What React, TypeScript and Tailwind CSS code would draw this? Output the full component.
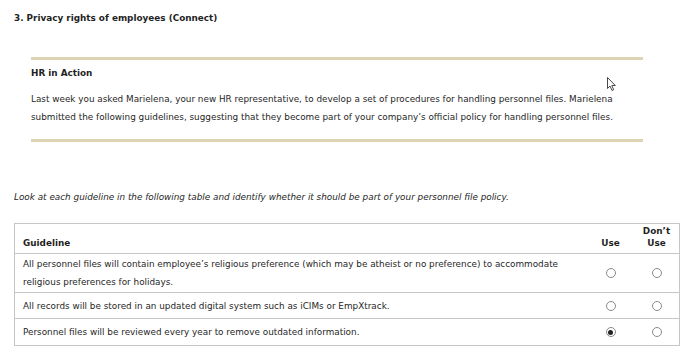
import React from "react";

type Row = { text: React.ReactNode; h: string; choice: "use" | "dont" | null };

const rows: Row[] = [
  {
    text: (
      <>
        All personnel files will contain employee’s religious preference (which may be atheist or no preference) to accommodate
        <br />
        religious preferences for holidays.
      </>
    ),
    h: "h-[39px]",
    choice: null,
  },
  {
    text: "All records will be stored in an updated digital system such as iCIMs or EmpXtrack.",
    h: "h-[26px]",
    choice: null,
  },
  {
    text: "Personnel files will be reviewed every year to remove outdated information.",
    h: "h-[26px]",
    choice: "use",
  },
];

function Radio({ checked }: { checked: boolean }) {
  return (
    <span className="flex h-[10px] w-[10px] items-center justify-center rounded-full border border-[#8a8a8a] bg-white">
      {checked && <span className="h-[5px] w-[5px] rounded-full bg-[#222]" />}
    </span>
  );
}

function Pointer() {
  return (
    <svg className="absolute left-[607px] top-[77px]" width="10" height="15" viewBox="0 0 10 15">
      <path
        d="M0.5 0.5 L0.5 11.5 L3 9 L5 13.5 L6.7 12.7 L4.8 8.5 L8.3 8.5 Z"
        fill="#fff"
        stroke="#333"
        strokeWidth="0.9"
        strokeLinejoin="round"
      />
    </svg>
  );
}

export default function App() {
  return (
    <div className="relative h-[356px] w-[700px] overflow-hidden bg-white font-['DejaVu_Sans',Verdana,sans-serif] text-[8.85px] text-[#1f1f1f]">
      <div className="pl-[14px] pt-[12px] font-bold leading-[12px]">
        3. Privacy rights of employees (Connect)
      </div>

      <div className="ml-[31px] mt-[33px] w-[612px] border-y-[3px] border-[#ddd4b3] pb-[13px] pt-[7px]">
        <div className="font-bold leading-[12px]">HR in Action</div>
        <p className="mt-[11px] leading-[18px]">
          Last week you asked Marielena, your new HR representative, to develop a set of procedures for handling personnel files. Marielena
          <br />
          submitted the following guidelines, suggesting that they become part of your company’s official policy for handling personnel files.
        </p>
      </div>

      <Pointer />

      <div className="mt-[49px] pl-[14px] italic leading-[12px]">
        Look at each guideline in the following table and identify whether it should be part of your personnel file policy.
      </div>

      <div className="ml-[14px] mt-[20px] w-[666px] border border-[#c6c6c6]">
        <div className="grid h-[30px] grid-cols-[1fr_47px_45px] items-end border-b border-[#c6c6c6] pb-[4px] font-bold leading-[12px]">
          <div className="pl-[8px]">Guideline</div>
          <div className="text-center">Use</div>
          <div className="text-center">
            Don’t
            <br />
            Use
          </div>
        </div>
        {rows.map((r, i) => (
          <div
            key={i}
            className={`grid grid-cols-[1fr_47px_45px] items-center ${r.h} ${i < rows.length - 1 ? "border-b border-[#c6c6c6]" : ""}`}
          >
            <div className="pl-[8px] leading-[18px]">{r.text}</div>
            <div className="flex justify-center">
              <Radio checked={r.choice === "use"} />
            </div>
            <div className="flex justify-center">
              <Radio checked={r.choice === "dont"} />
            </div>
          </div>
        ))}
      </div>
    </div>
  );
}
